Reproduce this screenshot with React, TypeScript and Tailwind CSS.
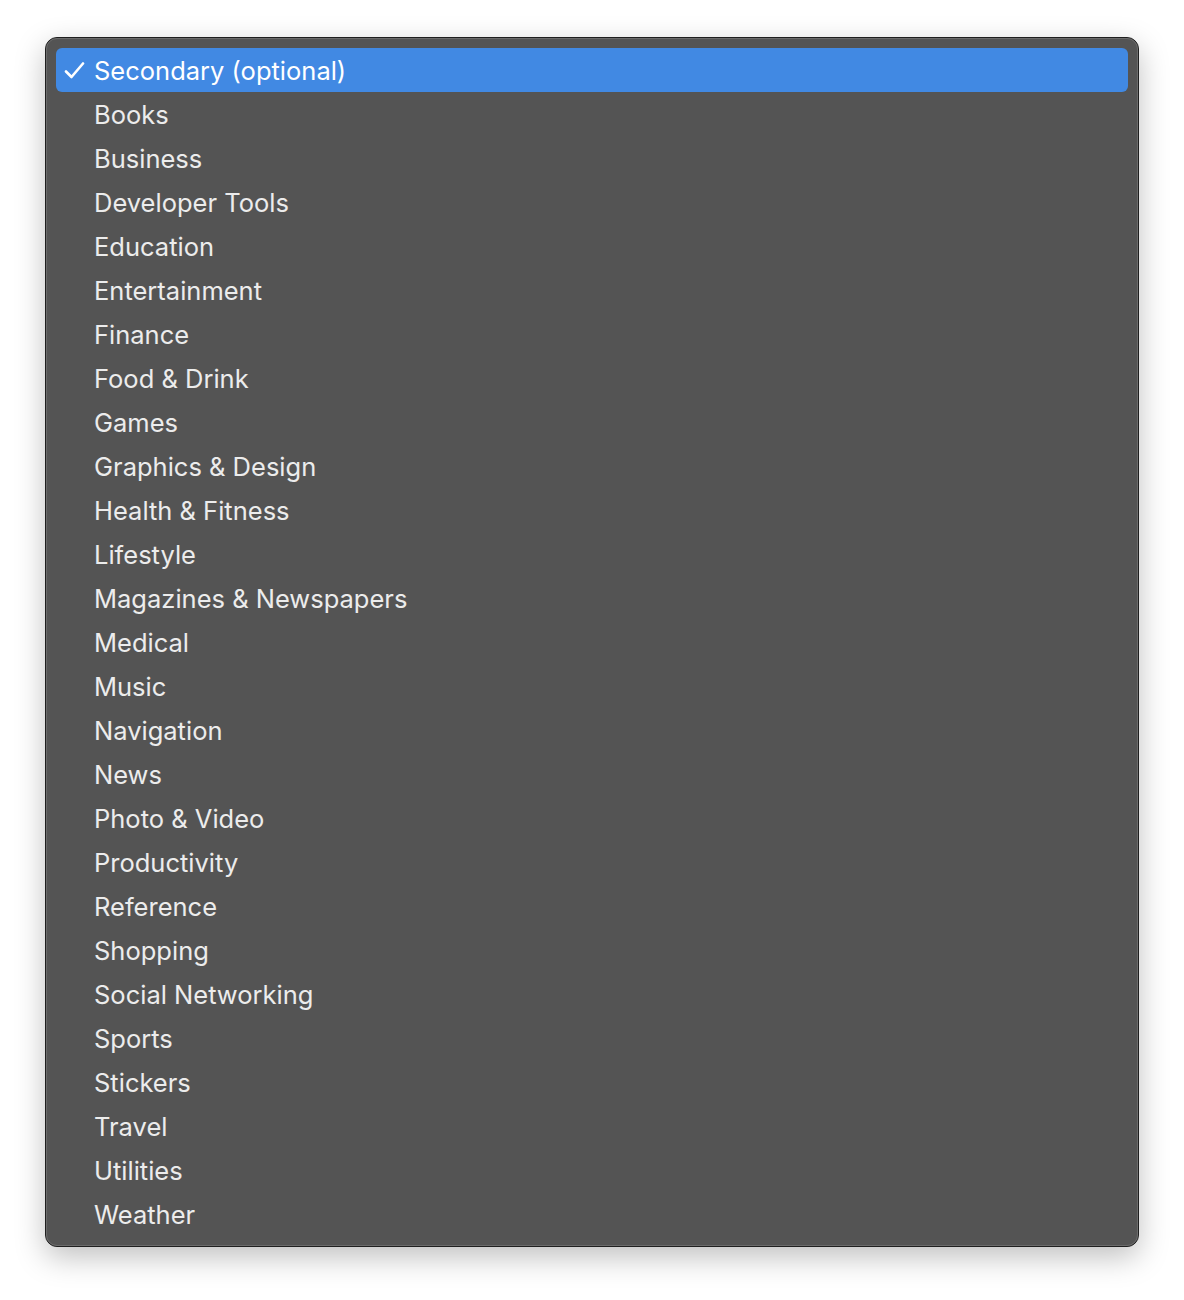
const categories = [
  'Books',
  'Business',
  'Developer Tools',
  'Education',
  'Entertainment',
  'Finance',
  'Food & Drink',
  'Games',
  'Graphics & Design',
  'Health & Fitness',
  'Lifestyle',
  'Magazines & Newspapers',
  'Medical',
  'Music',
  'Navigation',
  'News',
  'Photo & Video',
  'Productivity',
  'Reference',
  'Shopping',
  'Social Networking',
  'Sports',
  'Stickers',
  'Travel',
  'Utilities',
  'Weather',
]

export default function App() {
  return (
    <div className="min-h-[1300px] bg-white pt-[37px] pl-[45px] font-['Inter','Noto_Sans',sans-serif]">
      <div className="w-[1094px] rounded-[12px] border border-[#1f1f1f] bg-[#545454] shadow-[0_10px_30px_rgba(0,0,0,0.25)]">
        <div className="rounded-[11px] border border-[#6b6b6b] px-[9px] py-[9px]">
          <div className="flex h-[44px] items-center rounded-[6px] bg-[#4189e3] pt-[3px] text-white">
            <span className="flex w-[38px] justify-start pl-[8px]">
              <svg width="21" height="17" viewBox="0 0 21 17" fill="none" className="-mt-[3px]">
                <path d="M2 9.5 L7.5 15 L19 1.5" stroke="white" strokeWidth="2.6" strokeLinecap="round" strokeLinejoin="round" />
              </svg>
            </span>
            <span className="text-[25.5px]">Secondary (optional)</span>
          </div>
          {categories.map((name) => (
            <div key={name} className="flex h-[44px] items-center pt-[3px] pl-[38px] text-[25.5px] text-[#ececec]">
              {name}
            </div>
          ))}
        </div>
      </div>
    </div>
  )
}
